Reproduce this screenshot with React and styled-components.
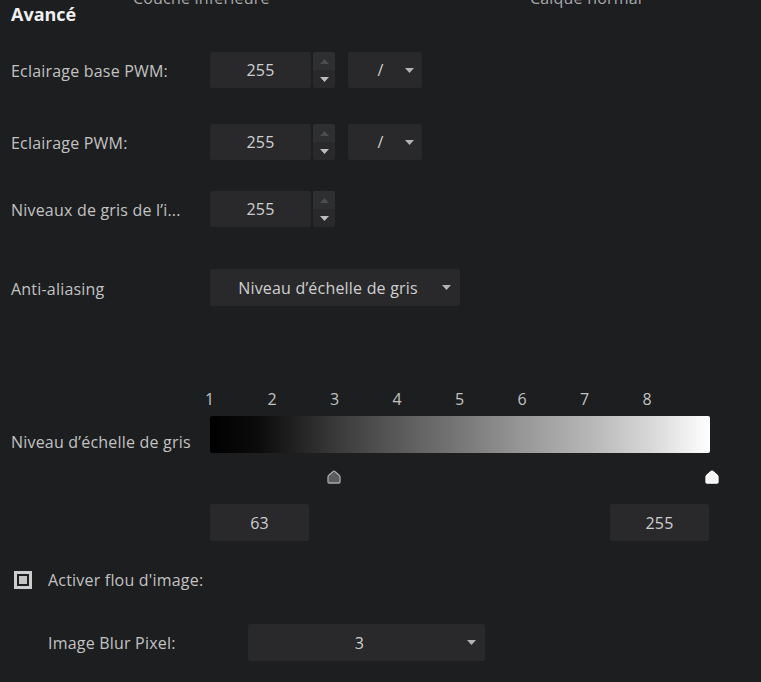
import React from "react";
import styled, { createGlobalStyle } from "styled-components";

const GlobalStyle = createGlobalStyle`
  html, body {
    margin: 0;
    padding: 0;
    background: #1d1e20;
    overflow: hidden;
  }
  body {
    font-family: "Open Sans", "Noto Sans", sans-serif;
    color: #c4c4c4;
  }
`;

const ticks = [1, 2, 3, 4, 5, 6, 7, 8];
const low = 63;
const high = 255;

const Arrow = () => (
  <svg width="9" height="5" viewBox="0 0 9 5">
    <path d="M0 0 H9 L4.5 5 Z" fill="#b4b4b4" />
  </svg>
);

const Handle = ({ light }) => (
  <svg width="14" height="14" viewBox="0 0 14 14">
    <path
      d="M7 1.2 Q7.6 1.2 8.2 1.8 L12.4 5.6 Q13 6.2 13 7 V12 Q13 13 12 13 H2 Q1 13 1 12 V7 Q1 6.2 1.6 5.6 L5.8 1.8 Q6.4 1.2 7 1.2 Z"
      fill={light ? "#f4f4f4" : "#5c5c5c"}
      stroke={light ? "#ffffff" : "#a8a8a8"}
      strokeWidth="1.3"
      strokeLinejoin="round"
    />
  </svg>
);

const Spin = ({ value }) => (
  <SpinGroup>
    <Field width={101}>{value}</Field>
    <Stepper>
      <StepButton>
        <svg width="9" height="5" viewBox="0 0 9 5">
          <path d="M0 5 H9 L4.5 0 Z" fill="#4c4d4e" />
        </svg>
      </StepButton>
      <StepButton>
        <svg width="9" height="5" viewBox="0 0 9 5">
          <path d="M0 0 H9 L4.5 5 Z" fill="#bdbdbd" />
        </svg>
      </StepButton>
    </Stepper>
  </SpinGroup>
);

const App = () => {
  return (
    <>
      <GlobalStyle />
      <Page>
        <Header>
          <Title>Avancé</Title>
          <Ghost width={397}>Couche inférieure</Ghost>
          <Ghost>Calque normal</Ghost>
        </Header>

        <Row top={15}>
          <Label>Eclairage base PWM:</Label>
          <Spin value="255" />
          <Select width={74} pad={8}>
            <SelectText indent={8}>/</SelectText>
            <Arrow />
          </Select>
        </Row>

        <Row top={36}>
          <Label>Eclairage PWM:</Label>
          <Spin value="255" />
          <Select width={74} pad={8}>
            <SelectText indent={8}>/</SelectText>
            <Arrow />
          </Select>
        </Row>

        <Row top={31}>
          <Label>Niveaux de gris de l’i...</Label>
          <Spin value="255" />
        </Row>

        <Row top={42} tall>
          <Label>Anti-aliasing</Label>
          <Select width={250} tall>
            <SelectText>Niveau d’échelle de gris</SelectText>
            <Arrow />
          </Select>
        </Row>

        <Scale>
          {ticks.map((t) => (
            <Tick key={t}>{t}</Tick>
          ))}
        </Scale>

        <Row top={6} tall>
          <Label low>Niveau d’échelle de gris</Label>
          <Gradient />
        </Row>

        <Track>
          <Thumb style={{ left: `${(low / 255) * 500}px` }}>
            <Handle />
          </Thumb>
          <Thumb style={{ left: `${(high / 255) * 500 + 2}px` }}>
            <Handle light />
          </Thumb>
        </Track>

        <Range>
          <Field width={99} tall>{low}</Field>
          <Field width={99} tall>{high}</Field>
        </Range>

        <Check>
          <Box>
            <Inner />
          </Box>
          <span>Activer flou d'image:</span>
        </Check>

        <SubRow>
          <SubLabel>Image Blur Pixel:</SubLabel>
          <Select width={237} tall>
            <SelectText>3</SelectText>
            <Arrow />
          </Select>
        </SubRow>
      </Page>
    </>
  );
};

export default App;

const Page = styled.div`
  width: 761px;
  height: 682px;
  padding-left: 11px;
  box-sizing: border-box;
  font-size: 16px;
  letter-spacing: 0.2px;
  display: flex;
  flex-direction: column;
`;

const Header = styled.div`
  display: flex;
  align-items: flex-start;
  height: 37px;
`;

const Title = styled.div`
  width: 122px;
  padding-top: 2px;
  font-size: 18px;
  font-weight: 700;
  letter-spacing: 0;
  color: #f0f0f0;
`;

const Ghost = styled.div`
  width: ${(p) => (p.width ? `${p.width}px` : "auto")};
  margin-top: -13px;
  color: #a9a9a9;
`;

const Row = styled.div`
  display: flex;
  align-items: center;
  margin-top: ${(p) => p.top}px;
  height: ${(p) => (p.tall ? 37 : 36)}px;
`;

const Label = styled.div`
  width: 199px;
  white-space: nowrap;
  color: #c2c2c2;
  padding-top: 2px;
  ${(p) =>
    p.low &&
    `
    align-self: flex-end;
    line-height: 22px;
    padding-top: 0;
  `}
`;

const SpinGroup = styled.div`
  display: flex;
  gap: 2px;
  margin-right: 13px;
`;

const Field = styled.div`
  width: ${(p) => p.width}px;
  height: ${(p) => (p.tall ? 37 : 36)}px;
  background: #29292b;
  border-radius: 2px;
  display: flex;
  align-items: center;
  justify-content: center;
  color: #cfcfcf;
`;

const Stepper = styled.div`
  width: 22px;
  height: 36px;
  display: flex;
  flex-direction: column;
  border-radius: 2px;
  overflow: hidden;
`;

const StepButton = styled.div`
  flex: 1;
  display: flex;
  align-items: center;
  justify-content: center;
  background: #2c2d2e;
  &:first-child {
    background: #2e2f30;
  }
  &:last-child {
    background: #29292b;
  }
`;

const Select = styled.div`
  width: ${(p) => p.width}px;
  height: ${(p) => (p.tall ? 37 : 36)}px;
  box-sizing: border-box;
  background: #29292b;
  border-radius: 2px;
  display: flex;
  align-items: center;
  padding: 0 ${(p) => p.pad || 9}px 0 0;
  color: #cfcfcf;
`;

const SelectText = styled.div`
  flex: 1;
  text-align: center;
  padding-left: ${(p) => p.indent || 4}px;
`;

const Scale = styled.div`
  display: flex;
  margin-top: 82px;
  margin-left: 194px;
  height: 22px;
  align-items: center;
`;

const Tick = styled.div`
  width: 62.5px;
  color: #c2c2c2;
`;

const Gradient = styled.div`
  width: 500px;
  height: 37px;
  border-radius: 2px;
  background: linear-gradient(
    to right,
    #000 0%,
    #0c0c0c 10%,
    #2a2a2a 20%,
    #3c3c3c 26%,
    #5a5a5a 38%,
    #777 50%,
    #969696 62%,
    #b4b4b4 75%,
    #d4d4d4 87%,
    #fff 100%
  );
`;

const Track = styled.div`
  position: relative;
  margin-left: 199px;
  width: 500px;
  height: 51px;
`;

const Thumb = styled.div`
  position: absolute;
  top: 17px;
  transform: translateX(-7px);
  line-height: 0;
`;

const Range = styled.div`
  display: flex;
  justify-content: space-between;
  margin-left: 199px;
  width: 499px;
`;

const Check = styled.div`
  display: flex;
  align-items: center;
  gap: 16px;
  margin-top: 30px;
  margin-left: 3px;
  height: 18px;
  color: #c2c2c2;
`;

const Box = styled.div`
  width: 18px;
  height: 18px;
  box-sizing: border-box;
  border: 3px solid #cdcdcd;
  background: #1d1e20;
  display: flex;
  align-items: center;
  justify-content: center;
`;

const Inner = styled.div`
  width: 8px;
  height: 8px;
  background: #c4c4c4;
`;

const SubRow = styled.div`
  display: flex;
  align-items: center;
  margin-top: 35px;
  margin-left: 37px;
  height: 37px;
`;

const SubLabel = styled.div`
  width: 200px;
  color: #c2c2c2;
`;
